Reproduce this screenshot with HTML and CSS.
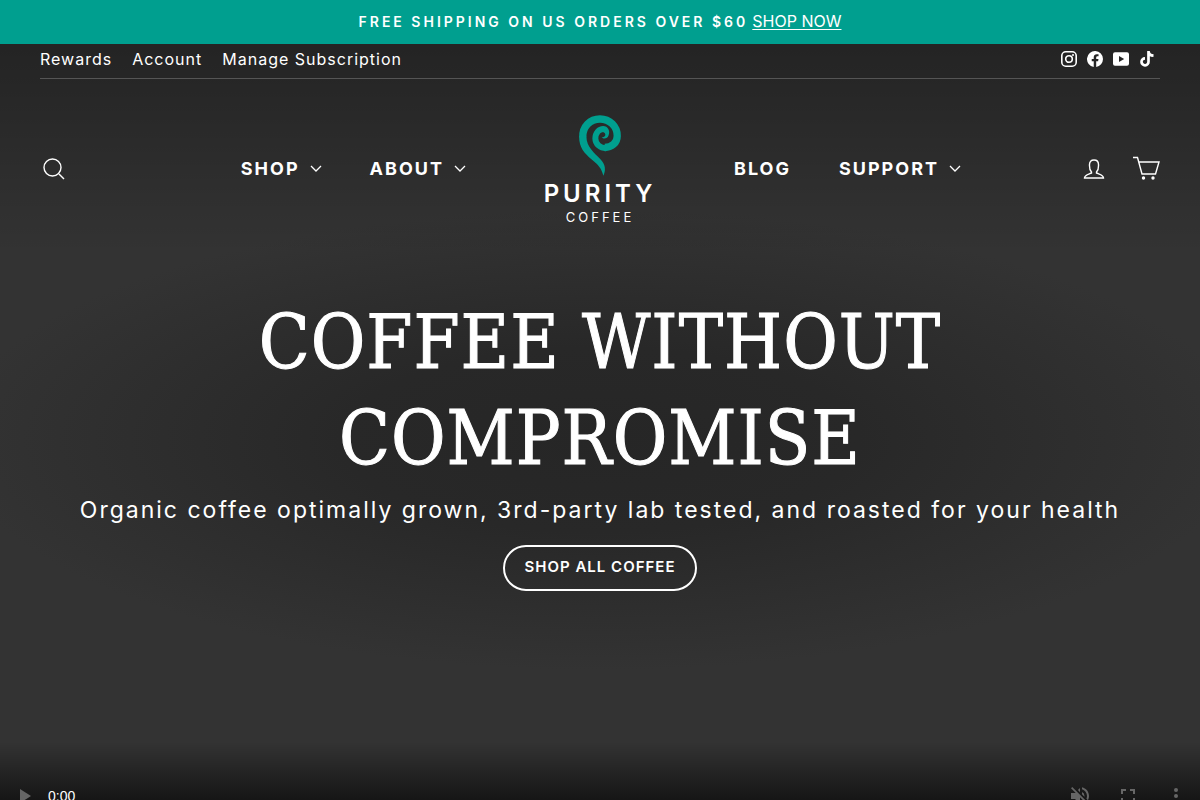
FILE: index.html
```
<!DOCTYPE html>
<html lang="en">
<head>
    <meta charset="UTF-8">
    <meta name="viewport" content="width=device-width, initial-scale=1.0">
    <title>Purity Coffee</title>
    <link rel="stylesheet" href="styles.css">
</head>
<body>
    <div class="announcement">
        <span class="announcement-text">Free shipping on US orders over $60</span>
        <a href="#" class="announcement-link">SHOP NOW</a>
    </div>

    <div class="page">
        <header class="header">
            <div class="toolbar">
                <nav class="toolbar-links">
                    <a href="#">Rewards</a>
                    <a href="#">Account</a>
                    <a href="#">Manage Subscription</a>
                </nav>
                <div class="social">
                    <a href="#" aria-label="Instagram">
                        <svg viewBox="0 0 16 16" fill="none" stroke="currentColor" stroke-width="1.6"><rect x="0.8" y="0.8" width="14.4" height="14.4" rx="4"/><circle cx="8" cy="8" r="3.3"/><circle cx="12" cy="4" r="1" fill="currentColor" stroke="none"/></svg>
                    </a>
                    <a href="#" aria-label="Facebook">
                        <svg viewBox="0 0 24 24" fill="currentColor"><path d="M24 12a12 12 0 1 0-13.9 11.9v-8.4H7.1V12h3V9.400c0-3 1.800-4.700 4.500-4.700 1.300 0 2.700.25 2.700.25v2.950h-1.500c-1.500 0-2 .93-2 1.900V12h3.400l-.55 3.500h-2.850v8.400A12 12 0 0 0 24 12z"/></svg>
                    </a>
                    <a href="#" aria-label="YouTube">
                        <svg viewBox="0 0 16 16" fill="currentColor"><path fill-rule="evenodd" d="M2 1.200h12a2 2 0 0 1 2 2v9.600a2 2 0 0 1-2 2H2a2 2 0 0 1-2-2V3.200a2 2 0 0 1 2-2zM6 5v6l5.200-3z"/></svg>
                    </a>
                    <a href="#" aria-label="TikTok">
                        <svg viewBox="0 0 16 16" fill="none" stroke="currentColor" stroke-width="2.7"><path d="M9.500 0v10.600A3.500 3.500 0 1 1 6 7.300M9.500 0.500c.3 2.400 2 4 5 4.200"/></svg>
                    </a>
                </div>
            </div>

            <div class="header-main">
                <div class="header-side">
                    <button class="icon-button" aria-label="Search">
                        <svg viewBox="0 0 28 28"><circle cx="12.500" cy="12.500" r="8.500"/><path d="M19 19l5 5"/></svg>
                    </button>
                </div>
                <nav class="nav nav-left">
                    <a href="#">Shop <svg class="chevron" viewBox="0 0 12 8"><path d="M1 1l5 5 5-5"/></svg></a>
                    <a href="#">About <svg class="chevron" viewBox="0 0 12 8"><path d="M1 1l5 5 5-5"/></svg></a>
                </nav>
                <a href="#" class="logo" aria-label="Purity Coffee">
                    <svg class="logo-mark" viewBox="25 15 130 184">
                        <path fill="currentColor" d="M27 80C27 114 43 131 65 149C85 165 95 176 100 198C108 182 107 165 92 149C74 130 49 112 49 80Z"/>
                        <path fill="none" stroke="currentColor" stroke-width="22" d="M38 82C37 50 60 27 90 27C120 27 142 50 142 78C142 99 125 113 104 113"/>
                        <path fill="none" stroke="currentColor" stroke-width="18" d="M108 115C90 115 76 102 76 86C76 69 87 57 100 57"/>
                        <path fill="currentColor" d="M98 48C113 47 122 62 116 76C113 86 101 89 95 82C103 83 107 78 106 73C104 67 100 66 96 66Z"/>
                    </svg>
                    <span class="logo-name">PURITY</span>
                    <span class="logo-sub">COFFEE</span>
                </a>
                <nav class="nav nav-right">
                    <a href="#">Blog</a>
                    <a href="#">Support <svg class="chevron" viewBox="0 0 12 8"><path d="M1 1l5 5 5-5"/></svg></a>
                </nav>
                <div class="header-side header-side-right">
                    <button class="icon-button" aria-label="Log in">
                        <svg viewBox="0 0 28 28"><path d="M11.500 17C9 14.500 9.500 12 9.500 9.500C9.500 6.500 11 5 14 5s4.500 1.500 4.500 4.500c0 2.500.5 5-2 7.500v1c3.500 1.500 7 2 7 5H4.500c0-3 3.500-3.500 7-5z"/></svg>
                    </button>
                    <button class="icon-button" aria-label="Cart">
                        <svg viewBox="0 0 28 28"><path d="M1 2.500h4.500L10 19h13.500L27 7H7"/><circle class="solid" cx="11.500" cy="23" r="1"/><circle class="solid" cx="21" cy="23" r="1"/></svg>
                    </button>
                </div>
            </div>
        </header>

        <main class="hero">
            <h1>Coffee Without Compromise</h1>
            <p>Organic coffee optimally grown, 3rd-party lab tested, and roasted for your health</p>
            <button class="hero-button">Shop all coffee</button>
        </main>

        <div class="video-controls">
            <button aria-label="Play" disabled>
                <svg viewBox="0 0 24 24" fill="currentColor"><path d="M8 5v14l11-7z"/></svg>
            </button>
            <span class="video-time">0:00</span>
            <div class="video-buttons">
                <button aria-label="Unmute" disabled>
                    <svg viewBox="0 0 24 24" fill="currentColor"><path d="M16.500 12A4.500 4.500 0 0 0 14 8v2.200l2.450 2.450zM19 12c0 .94-.2 1.820-.54 2.640l1.510 1.510A8.800 8.800 0 0 0 21 12c0-4.280-3-7.860-7-8.770v2.060c2.890.86 5 3.540 5 6.710zM4.270 3L3 4.270 7.730 9H3v6h4l5 5v-6.730l4.250 4.250c-.67.52-1.420.93-2.250 1.180v2.060a9 9 0 0 0 3.690-1.810L19.730 21 21 19.730l-9-9zM12 4L9.910 6.090 12 8.180z"/></svg>
                </button>
                <button aria-label="Full screen" disabled>
                    <svg viewBox="0 0 24 24" fill="currentColor"><path d="M7 14H5v5h5v-2H7zM5 10h2V7h3V5H5zM17 17h-3v2h5v-5h-2zM14 5v2h3v3h2V5z"/></svg>
                </button>
                <button aria-label="More options" disabled>
                    <svg viewBox="0 0 24 24" fill="currentColor"><circle cx="12" cy="6" r="2"/><circle cx="12" cy="12" r="2"/><circle cx="12" cy="18" r="2"/></svg>
                </button>
            </div>
        </div>
    </div>
</body>
</html>
```
FILE: styles.css
```
* {
    box-sizing: border-box;
}

body {
    margin: 0;
    font-family: 'Inter', sans-serif;
    font-size: 16px;
    color: #fff;
    background-color: #333;
}

a {
    color: inherit;
    text-decoration: none;
}

button {
    font-family: inherit;
    color: inherit;
    background: none;
    border: none;
    padding: 0;
    cursor: pointer;
}

svg {
    display: block;
}

/* Top bar */
.announcement {
    display: flex;
    justify-content: center;
    align-items: center;
    gap: 4px;
    min-height: 44px;
    padding: 0 40px 2px;
    background-color: #009f8f;
}

.announcement-text {
    font-size: 14px;
    font-weight: 600;
    letter-spacing: 3px;
    text-transform: uppercase;
}

.announcement-link {
    text-decoration: underline;
    text-underline-offset: 2px;
}

.page {
    background: radial-gradient(ellipse 54% 230px at 50% 396px, #262626 0%, #282828 40%, #333 100%);
}

/* Header */
.header {
    padding: 0 40px;
    background: linear-gradient(rgba(0, 0, 0, 0.3), rgba(0, 0, 0, 0));
}

.toolbar {
    display: flex;
    justify-content: space-between;
    align-items: center;
    height: 35px;
    padding-bottom: 4px;
    border-bottom: 1px solid #555;
}

.toolbar-links {
    display: flex;
    gap: 20px;
    letter-spacing: 1px;
}

.social {
    display: flex;
    gap: 10px;
    padding-right: 5px;
}

.social svg {
    width: 16px;
    height: 16px;
}

.header-main {
    display: grid;
    grid-template-columns: 80px 1fr 160px 1fr 80px;
    align-items: center;
    padding: 36px 0 28px;
}

.header-side {
    display: flex;
    gap: 24px;
    padding-bottom: 4px;
}

.header-side-right {
    justify-content: flex-end;
}

.icon-button svg {
    width: 28px;
    height: 28px;
    fill: none;
    stroke: currentColor;
    stroke-width: 1.4;
}

.icon-button .solid {
    fill: currentColor;
}

.nav {
    display: flex;
    gap: 48px;
    padding-bottom: 4px;
    font-size: 18px;
    font-weight: 700;
    letter-spacing: 2px;
    text-transform: uppercase;
}

.nav a {
    display: flex;
    align-items: center;
    gap: 10px;
}

.nav-left {
    justify-content: flex-end;
    padding-right: 54px;
}

.nav-right {
    padding-left: 54px;
}

.chevron {
    width: 12px;
    height: 8px;
    fill: none;
    stroke: currentColor;
    stroke-width: 1.3;
}

.logo {
    display: flex;
    flex-direction: column;
    align-items: center;
}

.logo-mark {
    width: 44px;
    height: 61px;
    color: #009f8f;
}

.logo-name {
    margin-top: 4px;
    font-size: 24px;
    font-weight: 600;
    line-height: 28px;
    letter-spacing: 4px;
}

.logo-sub {
    font-size: 13px;
    line-height: 18px;
    letter-spacing: 3px;
}

/* Hero */
.hero {
    display: flex;
    flex-direction: column;
    align-items: center;
    min-height: 520px;
    padding: 40px 40px;
    text-align: center;
}

.hero h1 {
    max-width: 800px;
    margin: 0;
    font-family: 'DejaVu Serif Condensed', 'DejaVu Serif', serif;
    font-size: 74px;
    font-weight: 400;
    line-height: 96px;
    letter-spacing: 1px;
    text-transform: uppercase;
    -webkit-text-stroke: 1px #fff;
}

.hero p {
    margin: 8px 0 19px;
    font-size: 23px;
    line-height: 32px;
    letter-spacing: 2px;
}

.hero-button {
    min-height: 46px;
    padding: 0 20px 4px;
    border: 2px solid #fff;
    border-radius: 24px;
    font-size: 15px;
    font-weight: 600;
    letter-spacing: 1px;
    text-transform: uppercase;
}

/* Video controls */
.video-controls {
    display: flex;
    align-items: center;
    gap: 12px;
    margin-top: -32px;
    padding: 42px 12px 14px;
    background: linear-gradient(rgba(0, 0, 0, 0), rgba(0, 0, 0, 0.8));
}

.video-controls button {
    color: #666;
}

.video-controls svg {
    width: 24px;
    height: 24px;
}

.video-time {
    flex: 1;
    font-family: 'Liberation Sans', Arial, sans-serif;
    font-size: 14px;
}

.video-buttons {
    display: flex;
    gap: 24px;
}
```
